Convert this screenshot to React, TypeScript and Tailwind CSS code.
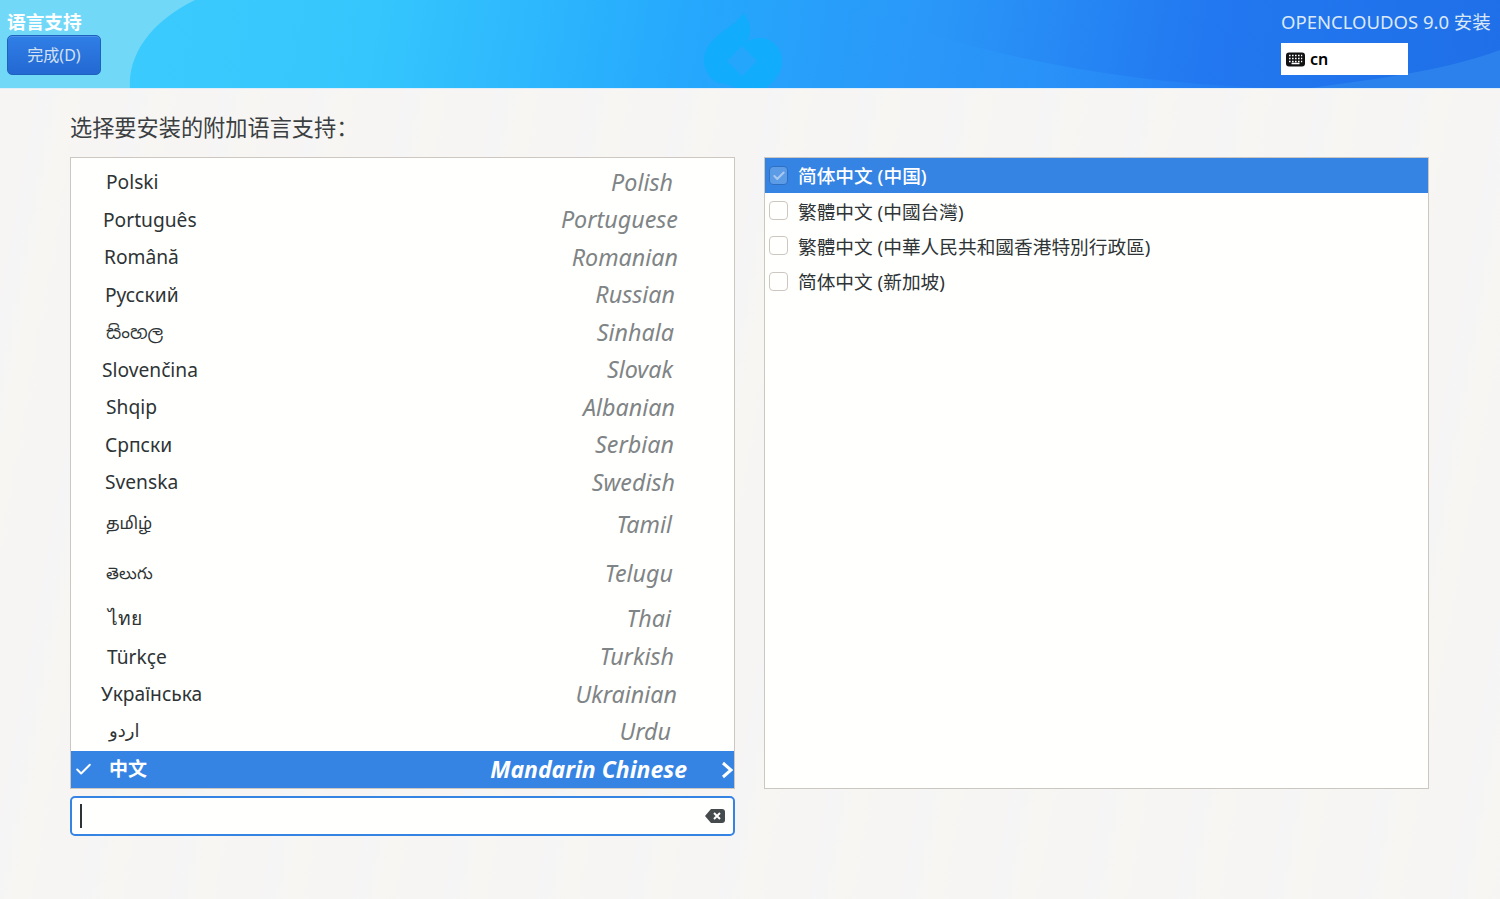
import { Check } from "lucide-react";

const languages = [
  { name: "Polski", en: "Polish", row: "h-[37.5px]", nameCls: "pl-[35px] text-[19.2px]", enCls: "pr-[61px]" },
  { name: "Português", en: "Portuguese", row: "h-[37.5px]", nameCls: "pl-[32px] text-[19.2px]", enCls: "pr-[56px]" },
  { name: "Română", en: "Romanian", row: "h-[37.5px]", nameCls: "pl-[33px] text-[19.2px]", enCls: "pr-[56px]" },
  { name: "Русский", en: "Russian", row: "h-[37.5px]", nameCls: "pl-[34px] text-[19.2px]", enCls: "pr-[59px]" },
  { name: "සිංහල", en: "Sinhala", row: "h-[37.5px]", nameCls: "pl-[35px] text-[18.5px] mb-[2px]", enCls: "pr-[60px]" },
  { name: "Slovenčina", en: "Slovak", row: "h-[37.5px]", nameCls: "pl-[31px] text-[19.2px]", enCls: "pr-[61px]" },
  { name: "Shqip", en: "Albanian", row: "h-[37.5px]", nameCls: "pl-[35px] text-[19.2px]", enCls: "pr-[59px]" },
  { name: "Српски", en: "Serbian", row: "h-[37.5px]", nameCls: "pl-[34px] text-[19.2px]", enCls: "pr-[60px]" },
  { name: "Svenska", en: "Swedish", row: "h-[37.5px]", nameCls: "pl-[34px] text-[19.2px]", enCls: "pr-[59px]" },
  { name: "தமிழ்", en: "Tamil", row: "h-[47px]", nameCls: "pl-[35px] text-[16.5px] mb-[3px]", enCls: "pr-[62px]" },
  { name: "తెలుగు", en: "Telugu", row: "h-[50px]", nameCls: "pl-[35px] text-[16.5px]", enCls: "pr-[61px]" },
  { name: "ไทย", en: "Thai", row: "h-[40px]", nameCls: "pl-[37px] text-[19.2px] font-medium", enCls: "pr-[63px]" },
  { name: "Türkçe", en: "Turkish", row: "h-[37.5px]", nameCls: "pl-[36px] text-[19.2px]", enCls: "pr-[60px]" },
  { name: "Українська", en: "Ukrainian", row: "h-[37.5px]", nameCls: "pl-[30px] text-[19.2px]", enCls: "pr-[57px]" },
  { name: "اردو", en: "Urdu", row: "h-[37.5px]", nameCls: "pl-[38px] text-[18px] mb-[4px]", enCls: "pr-[63px]" },
];

const locales = ["繁體中文 (中國台灣)", "繁體中文 (中華人民共和國香港特別行政區)", "简体中文 (新加坡)"];

const font = "font-['Noto_Sans','Noto_Sans_CJK_SC','Noto_Sans_Sinhala','Noto_Sans_Tamil','DejaVu_Sans',sans-serif]";

const App = () => {
  return (
    <div className={`w-[1500px] h-[899px] overflow-hidden flex flex-col bg-[#f6f5f4] text-[#2e3436] ${font}`}>
      {/* Header */}
      <header className="relative h-[89px] shrink-0 border-b border-[#dfeefa] bg-[linear-gradient(100deg,#3fcdfd_0%,#35c6fd_25%,#25a8fd_46%,#2a97f8_62%,#2278f0_80%,#1f6fe8_100%)]">
        <svg className="absolute inset-0" width="1500" height="88" viewBox="0 0 1500 88" fill="none">
          <defs>
            <linearGradient id="swoosh" x1="800" y1="0" x2="1270" y2="0" gradientUnits="userSpaceOnUse">
              <stop offset="0" stopColor="#2b98fb" stopOpacity="0" />
              <stop offset="0.5" stopColor="#2b98fb" stopOpacity="0.6" />
              <stop offset="1" stopColor="#2b8cf8" stopOpacity="0.2" />
            </linearGradient>
          </defs>
          <path d="M0 0H195C150 22 128 55 130 88H0Z" fill="#72d8f8" />
          <path d="M835 0C930 40 1080 82 1270 88H800V0Z" fill="url(#swoosh)" />
          <path d="M1500 50C1440 72 1380 78 1310 88H1500Z" fill="#2f86ee" opacity="0.8" />
          <path
            d="M743 13C751 21 752 33 747 42C751 39 755 38 760 38C772 38 782 48 782 60C782 72 776 80 766 88H737L726 84C712 84 704 72 704 60C704 48 712 40 722 32C731 25 739 21 743 13Z"
            fill="#12acfd"
          />
          <path d="M742 46L757 61L742 76L727 61Z" fill="#25a6fd" />
        </svg>
        <div className="relative h-full flex justify-between">
          <div className="pl-[7px]">
            <h1 className="pt-[9px] text-[18.7px] leading-[26px] font-bold text-white">语言支持</h1>
            <button className="w-[94px] h-[40px] rounded-[5px] border border-[#1f62bd] bg-[linear-gradient(#2f7fe6,#2468d2)] text-[#d3e1f3] text-[16px] shadow-[inset_0_1px_0_#4b92ea]">
              完成(D)
            </button>
          </div>
          <div className="w-[219px] pt-[9px]">
            <div className="text-[18.5px] leading-[25px] text-[#dbe8f8] whitespace-nowrap">OPENCLOUDOS 9.0 安装</div>
            <div className="mt-[9px] w-[127px] h-[32px] bg-white flex items-center gap-[5px] pl-[5px] text-black">
              <svg width="19" height="15" viewBox="0 0 19 15">
                <rect x="0" y="0.5" width="19" height="14" rx="3" fill="#111" />
                <path
                  d="M3 3.5h1.6M6 3.5h1.6M9 3.5h1.6M12 3.5h1.6M15 3.5h1.2M3 6.5h1.6M6 6.5h1.6M9 6.5h1.6M12 6.5h1.6M15 6.5h1.2M3 9.5h1.6M5.5 11.5h8M15 9.5h1.2M6 9.5h1.6M9 9.5h1.6M12 9.5h1.6"
                  stroke="#fff"
                  strokeWidth="1.3"
                />
              </svg>
              <span className="text-[16px] font-semibold leading-none">cn</span>
            </div>
          </div>
        </div>
      </header>

      {/* Body */}
      <main className="flex-1 pl-[70px] pt-[24px] bg-[repeating-linear-gradient(100deg,#f6f5f4_0px,#f6f5f4_38px,#f5f5f7_39px,#f7f6f2_70px,#f6f5f4_90px)]">
        <p className="text-[22.2px] leading-[30px] text-[#3b3f41]">选择要安装的附加语言支持：</p>
        <div className="mt-[14px] flex gap-[29px]">
          <div className="w-[665px]">
            <div className="h-[632px] border border-[#cdc7c2] bg-[#fffffd] pt-[6px] flex flex-col">
              {languages.map((lang) => (
                <div key={lang.en} className={`${lang.row} shrink-0 flex items-center justify-between`}>
                  <span className={`${lang.nameCls} text-[#2e3436]`}>{lang.name}</span>
                  <span className={`${lang.enCls} mb-[1px] italic text-[#7f8486] text-[23.3px]`}>{lang.en}</span>
                </div>
              ))}
              <div className="relative h-[37px] mt-auto shrink-0 flex items-center justify-between bg-[#3584e4] text-white">
                <div className="flex items-center">
                  <Check className="ml-[3px] w-[19px] h-[19px]" strokeWidth={2.5} />
                  <span className="ml-[16px] text-[19px] font-semibold">中文</span>
                </div>
                <div className="flex items-center">
                  <span className="italic font-bold text-[23px] mr-[34px]">Mandarin Chinese</span>
                  <svg className="mr-[1px]" width="12" height="18" viewBox="0 0 12 18" fill="none">
                    <path d="M2 2L10 9L2 16" stroke="#fff" strokeWidth="3" />
                  </svg>
                </div>
              </div>
            </div>
            <div className="relative mt-[7px] h-[40px] rounded-[5px] border-2 border-[#3584e4] bg-[#fffffd] flex items-center justify-between pl-[8px] pr-[8px]">
              <div className="w-[2px] h-[24px] bg-[#2e3436]" />
              <svg width="20" height="14" viewBox="0 0 20 14">
                <path d="M6 0H17a3 3 0 0 1 3 3V11a3 3 0 0 1-3 3H6L0 7Z" fill="#454a4c" />
                <path d="M9 4l6 6M15 4l-6 6" stroke="#fff" strokeWidth="2" />
              </svg>
            </div>
          </div>
          <div className="w-[665px] h-[632px] border border-[#cdc7c2] bg-[#fffffd] text-[18.7px]">
            <div className="h-[35px] bg-[#3584e4] text-white font-medium flex items-center pl-[4px]">
              <span className="w-[19px] h-[19px] rounded-[4px] border border-[#2f6fc0] bg-[#5c9be6] flex items-center justify-center">
                <Check className="w-[14px] h-[14px] text-[#a9c9ef]" strokeWidth={3.5} />
              </span>
              <span className="ml-[10px] pt-[1px]">简体中文 (中国)</span>
            </div>
            {locales.map((label) => (
              <div key={label} className="h-[35.3px] flex items-center pl-[4px] text-[#2e3436]">
                <span className="w-[19px] h-[19px] rounded-[4px] border border-[#cdc7c2] bg-[#fffffd]" />
                <span className="ml-[10px] pt-[2px]">{label}</span>
              </div>
            ))}
          </div>
        </div>
      </main>
    </div>
  );
};

export default App;
